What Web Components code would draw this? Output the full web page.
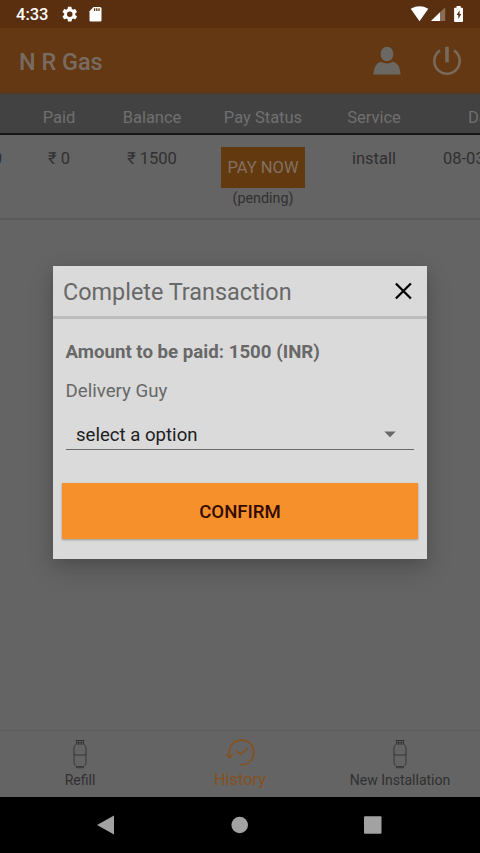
<!DOCTYPE html>
<html lang="en"><head><meta charset="utf-8"><title>N R Gas</title>
<style>
html,body{margin:0;height:853px;overflow:hidden;background:#646464}
body{font-family:Roboto,"Noto Sans",sans-serif}
</style></head><body>
<gas-app></gas-app>
<script>
const define=(name,html)=>{
  const t=document.createElement('template');t.innerHTML=html;
  customElements.define(name,class extends HTMLElement{
    constructor(){super();this.attachShadow({mode:'open'}).append(t.content.cloneNode(true));}
  });
};
define('status-bar',`<style>
:host{display:flex;height:28px;background:#592f0f;box-sizing:border-box;padding:0 16px;justify-content:space-between;color:#fff;font-size:16.5px;line-height:29px;font-weight:500}
div{display:flex}svg{display:block;flex:none}
</style>
<div><span style="width:46px">4:33</span>
<svg width="16" height="28" viewBox="0 0 16 28"><g transform="translate(-1.500 5) scale(.77)"><path fill="#fff" d="M19.1 12.9a7 7 0 0 0 0-1.9l2-1.6c.2-.1.2-.4.1-.6l-1.9-3.3c-.1-.2-.4-.3-.6-.2l-2.4 1a7 7 0 0 0-1.6-1l-.4-2.5a.5.5 0 0 0-.4-.4h-3.8c-.3 0-.5.2-.5.4l-.4 2.5a7 7 0 0 0-1.6 1l-2.4-1c-.2-.1-.5 0-.6.2L2.7 8.8c-.1.2 0 .5.1.6l2 1.6a7 7 0 0 0 0 1.9l-2 1.6c-.2.1-.2.4-.1.6l1.9 3.3c.1.2.4.3.6.2l2.4-1a7 7 0 0 0 1.6 1l.4 2.5c0 .3.2.4.5.4h3.8c.3 0 .5-.2.5-.4l.4-2.5a7 7 0 0 0 1.6-1l2.4 1c.2.1.5 0 .6-.2l1.9-3.3c.1-.2.1-.5-.1-.6zM12 15.6a3.6 3.6 0 1 1 0-7.2 3.6 3.6 0 0 1 0 7.2z"/></g></svg>
<svg style="margin-left:11px" width="13" height="28" viewBox="0 0 13 28"><path fill="#fff" d="M4.5 7H11Q12.5 7 12.5 8.5V20.5Q12.5 21.5 11.3 21.5H1.5Q.5 21.5.5 20.3V11.2z"/><path stroke="#592f0f" stroke-width="1.3" d="M5.6 8.3v2.8M7.8 8.3v2.8M10 8.3v2.8"/></svg></div>
<div><svg width="54" height="28" viewBox="0 0 54 28"><path fill="#fff" d="M.7 8.7Q9.5 3.8 18.3 8.7L9.5 21.2z"/><path fill="#8b6d57" d="M35.2 7.2V21H21.2z"/><path fill="#fff" d="M30 12.2V21h-9z"/><path fill="#fff" d="M46.5 6h4.2v1.7h1.4q.9 0 .9.9v12.5q0 .9-.9.9h-7.1q-.9 0-.9-.9V8.6q0-.9.9-.9h1.5z"/><path fill="#592f0f" d="M49.7 10.2l-3.1 4.7h1.7v4l3-4.9h-1.8z"/></svg></div>`);
define('app-bar',`<style>
:host{display:flex;align-items:center;height:66px;background:#633812;box-sizing:border-box;padding:0 18px 0 19px;border-bottom:2px solid #58381d;color:#786c62}
h1{font-size:23.400px;font-weight:500;line-height:32px;margin:4px auto 0 0}svg{display:block}
</style><h1>N R Gas</h1>
<svg width="28" height="30" viewBox="0 0 28 30" style="margin:1px 31px 0 0"><ellipse cx="14" cy="8" rx="6.4" ry="7.3" fill="#6b6863"/><path fill="#6b6863" d="M.3 28.5Q1.4 17 8 15.8q6 3.6 12 0Q26.600 17 27.700 28.500z"/></svg>
<svg width="30" height="30" viewBox="0 0 30 30" style="margin-top:2px" fill="none" stroke="#79695a" stroke-width="2.600"><path d="M8 4.400a12.700 12.700 0 1 0 14 0"/><path stroke-width="3.600" d="M15 .800v15.500"/></svg>`);
define('history-table',`<style>
:host{display:block;height:126px;overflow:hidden;font-size:16.500px;color:#303030}
.head,.row{display:grid;grid-template-columns:8px 102px 84px 138px 84px 150px;box-sizing:border-box;text-align:center;width:566px}
.head{height:41px;background:#424242;border-bottom:2px solid #151716;color:#707070;line-height:47px}
.row{height:85px;border-bottom:2px solid #5a5a5a;line-height:48px}
span{white-space:nowrap}.zero{direction:rtl;width:2px}
.pay{display:flex;flex-direction:column;align-items:center}
.btn{background:#633910;color:#827161;width:84px;height:41px;line-height:42px;margin-top:12px}
.pay small{font-size:14.300px;line-height:21px}
.last{text-align:left}
</style><div class="head"><span></span><span>Paid</span><span>Balance</span><span>Pay Status</span><span>Service</span><span class="last" style="padding-left:52px">Date</span></div>
<div class="row"><span class="zero">0</span><span>₹ 0</span><span>₹ 1500</span><div class="pay"><span class="btn">PAY NOW</span><small>(pending)</small></div><span>install</span><span class="last" style="padding-left:27px">08-03-2020</span></div>`);
define('gas-bottle',`<style>:host{display:block;height:30px}svg{display:block}</style>
<svg width="14" height="30" viewBox="0 0 14 30" fill="none" stroke="#303030" stroke-width=".85"><path d="M3.500 5V1.500h7V5M2.800 1.500h8.500M5.200 2v2.500M8.800 2v2.500M5 3.500h4M3.500 5h7M3.200 5.200Q1 6.500 1 9v14.500Q1 26.500 3.500 27.500h7q2.500-1 2.500-4V9q0-2.500-2.200-3.800M1 16h12M3.500 27.500v1.200h7v-1.200"/></svg>`);
define('tab-item',`<style>:host{display:flex;flex-direction:column;align-items:center;font-size:14px;line-height:22px;color:#303030;padding-top:8px}
:host([active]){color:#85511f;font-size:16.400px}</style><slot name="icon"></slot><slot></slot>`);
define('tab-bar',`<style>:host{display:grid;grid-template-columns:1fr 1fr 1fr;height:67px;border-top:1px solid #5d5d5d;box-sizing:border-box}svg{display:block}</style>
<tab-item><gas-bottle slot="icon"></gas-bottle><span>Refill</span></tab-item>
<tab-item active><svg slot="icon" width="30" height="30" viewBox="0 0 30 30" fill="none" stroke="#85511f" stroke-width="1.600"><path d="M4.300 18V13.500A12.300 12.300 0 1 1 15.500 25.700M11 12.300l5 3 6.700-6"/><path fill="#85511f" stroke-width=".8" d="M1.300 15.500l3 4 3.800-3.500-3.500.8z"/></svg><span>History</span></tab-item>
<tab-item><gas-bottle slot="icon"></gas-bottle><span>New Installation</span></tab-item>`);
define('nav-bar',`<style>:host{display:block;height:56px;background:#000}svg{display:block}</style>
<svg width="480" height="56" viewBox="0 0 480 56" fill="#a2a2a2"><path d="M97 28L114 18.500v19z"/><circle cx="239.700" cy="28" r="8.300"/><rect x="364" y="19.300" width="17.500" height="17.500" rx="1"/></svg>`);
define('pay-dialog',`<style>
:host{display:block;box-sizing:border-box;width:374px;height:293px;background:#dadada;box-shadow:0 10px 24px rgba(0,0,0,.2),0 2px 10px rgba(0,0,0,.08);color:#686868}
header{display:flex;align-items:center;justify-content:space-between;box-sizing:border-box;height:53px;padding:0 15px 0 10px;border-bottom:3px solid #bdbdbd;font-size:23.400px;line-height:34px}
header span{padding-top:2px}svg{display:block}
.body{padding:20px 9px 0 9px}
.amt{font-size:18.680px;font-weight:700;line-height:26px;padding-left:3.500px}
.lab{font-size:18.700px;line-height:26px;padding:13px 0 0 3.500px}
.select{display:flex;justify-content:space-between;align-items:center;box-sizing:border-box;height:30px;margin:16px 4px 0;padding:0 18px 0 10px;border-bottom:1px solid #686868;color:#202020;font-size:18.600px}
.confirm{height:56px;margin-top:33px;background:#f5902b;color:#330b00;font-size:18.600px;font-weight:500;line-height:58px;text-align:center;box-shadow:0 1px 2px rgba(0,0,0,.3)}
</style><header><span>Complete Transaction</span><svg width="17" height="18" viewBox="0 0 17 18" stroke="#000" stroke-width="2.300"><path d="M.9 1.500l15 15M15.900 1.500l-15 15"/></svg></header>
<div class="body"><div class="amt">Amount to be paid: 1500 (INR)</div><div class="lab">Delivery Guy</div><div class="select"><span>select a option</span><svg width="12" height="7" viewBox="0 0 12 7"><path fill="#686868" d="M.3.500h11.400L6 6.300z"/></svg></div><div class="confirm">CONFIRM</div></div>`);
define('gas-app',`<style>:host{display:flex;flex-direction:column;width:480px;height:853px;position:relative;background:#646464;overflow:hidden}
tab-bar{margin-top:auto}pay-dialog{position:absolute;left:53px;top:266px}</style>
<status-bar></status-bar><app-bar></app-bar><history-table></history-table><tab-bar></tab-bar><nav-bar></nav-bar><pay-dialog></pay-dialog>`);
</script></body></html>
